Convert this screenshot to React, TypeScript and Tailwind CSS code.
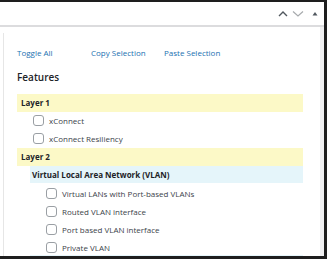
import React from "react";

const Box = () => (
  <span className="block w-[11px] h-[11px] shrink-0 rounded-[3px] border border-[#9a9fa4] bg-white" />
);

const Item = ({ label, last }: { label: string; last?: boolean }) => (
  <div className={`flex items-start pt-[3px] pl-[16px] ${last ? "h-[16px]" : "h-[18px]"}`}>
    <Box />
    <span className="ml-[5px] text-[8px] leading-[11px] text-[#3c434a]">{label}</span>
  </div>
);

export default function App() {
  return (
    <div
      className="w-[327px] h-[259px] overflow-hidden bg-white border-t-2 border-r-[3px] border-b-[3px] border-[#1e1e1e] flex flex-col"
      style={{ fontFamily: '"Open Sans", "Noto Sans", sans-serif' }}
    >
      <div className="h-[25px] shrink-0 border-b-2 border-[#dcdcde] flex items-center justify-end pr-[5px]">
        <svg width="10" height="7" viewBox="0 0 10 7">
          <path d="M1 6 L5 2 L9 6" fill="none" stroke="#50575e" strokeWidth="1.4" />
        </svg>
        <svg width="12" height="7" viewBox="0 0 12 7" className="ml-[4px]">
          <path d="M1 1.5 L6 6 L11 1.5" fill="none" stroke="#a7aaad" strokeWidth="1.2" />
        </svg>
        <svg width="8" height="7" viewBox="0 0 8 7" className="ml-[7px]">
          <path d="M1.5 5.5 L4 2 L6.5 5.5 Z" fill="#50575e" />
        </svg>
      </div>
      <div className="flex-1 flex min-h-0">
        <div className="flex-1 pl-[3px] min-w-0">
          <div className="mt-[6px] h-full border-l border-[#e6e6e6] pl-[13px] pr-[17px] pt-[13px]">
            <div className="flex h-[14px] items-center text-[8px] text-[#2271b1]">
              <span className="w-[74px]">Toggle All</span>
              <span className="w-[73px]">Copy Selection</span>
              <span>Paste Selection</span>
            </div>
            <div className="mt-[9px] h-[16px] flex items-center text-[10px] font-semibold text-[#1d2327]">
              Features
            </div>
            <div className="mt-[9px] h-[18px] bg-[#fcf9c7] flex items-center pl-[4px] text-[8px] font-bold text-[#1d2327]">
              Layer 1
            </div>
            <Item label="xConnect" />
            <Item label="xConnect Resiliency" />
            <div className="h-[18px] bg-[#fcf9c7] flex items-center pl-[4px] text-[8px] font-bold text-[#1d2327]">
              Layer 2
            </div>
            <div className="ml-[13px]">
              <div className="h-[17px] bg-[#e5f5fa] flex items-center pl-[2px] text-[8px] font-bold text-[#1d2327]">
                Virtual Local Area Network (VLAN)
              </div>
              <div className="mt-[2px]">
                <Item label="Virtual LANs with Port-based VLANs" />
                <Item label="Routed VLAN interface" />
                <Item label="Port based VLAN interface" />
                <Item label="Private VLAN" last />
              </div>
              <div className="h-[17px] bg-[#e5f5fa]" />
            </div>
          </div>
        </div>
        <div className="w-[4px] shrink-0 bg-[#f0f0f1]" />
      </div>
    </div>
  );
}
